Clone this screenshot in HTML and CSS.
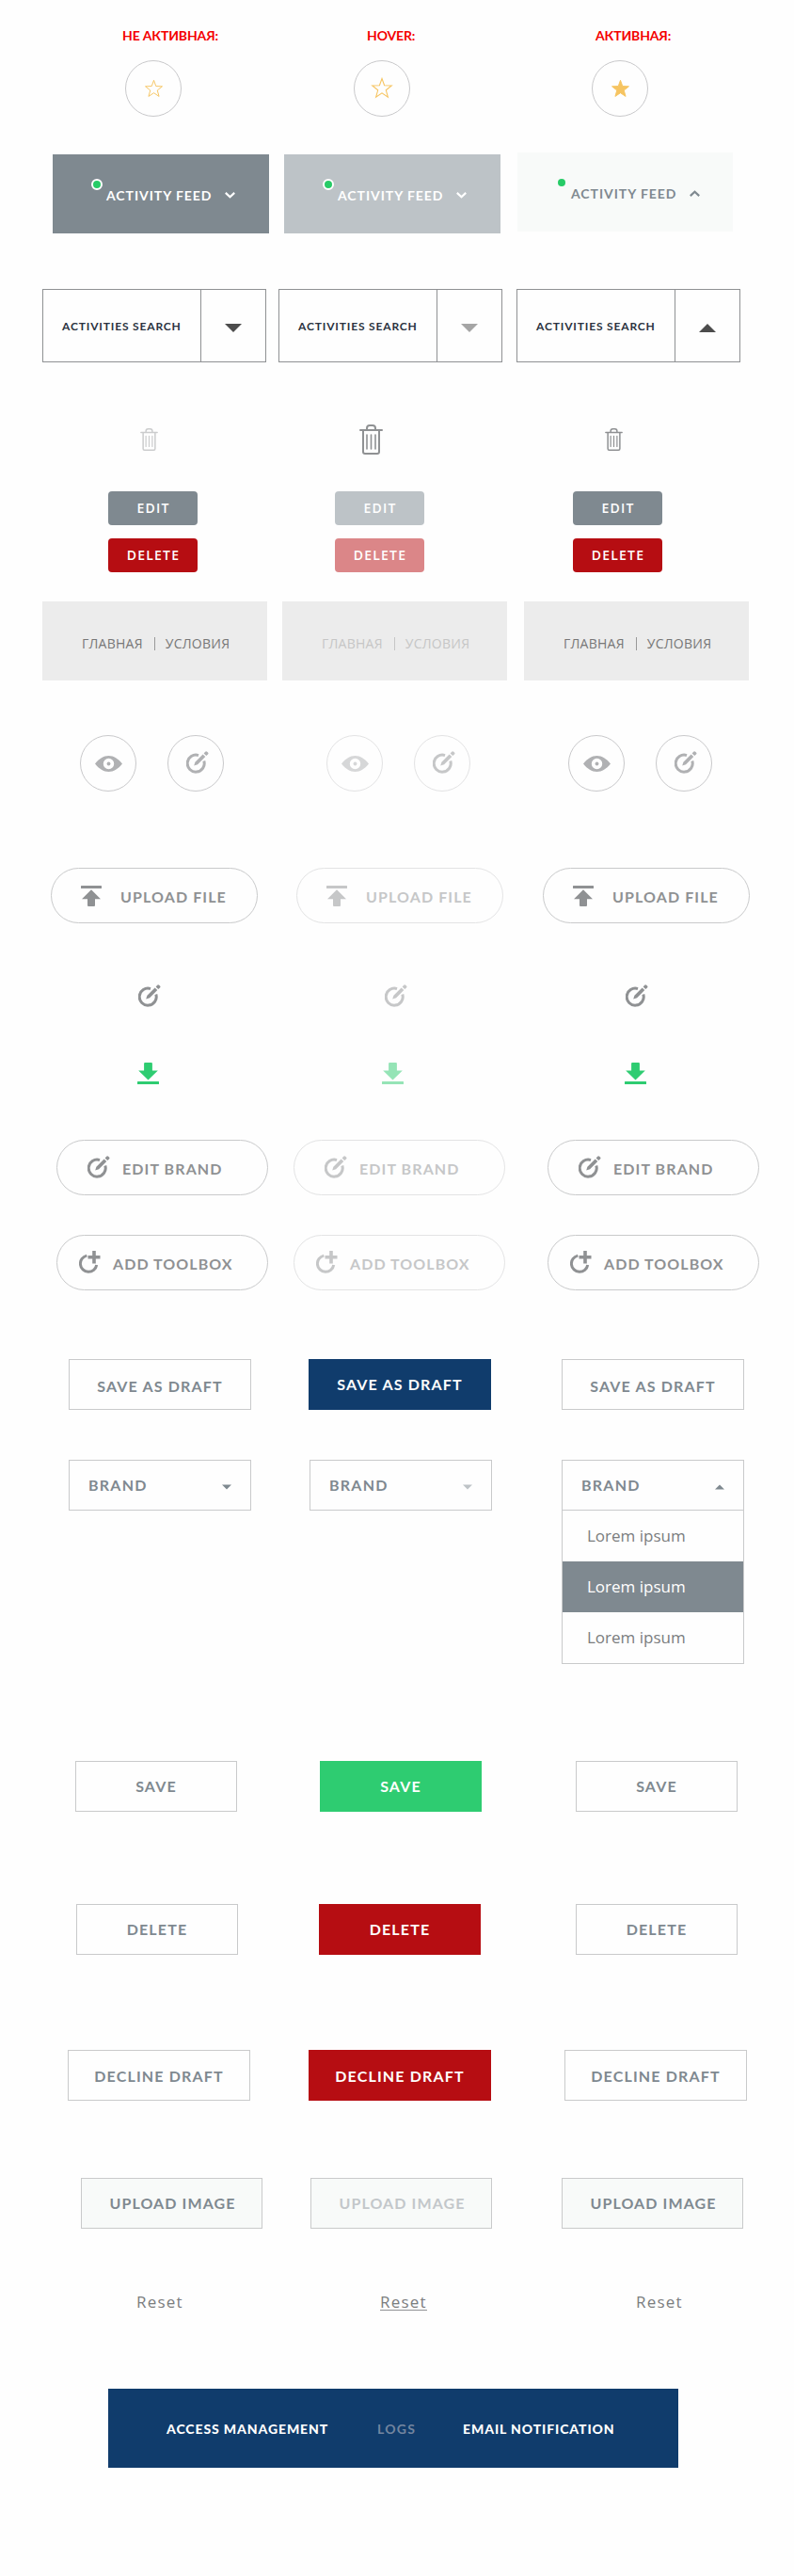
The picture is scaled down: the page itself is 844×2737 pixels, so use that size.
FILE: index.html
```
<!DOCTYPE html>
<html lang="ru">
<head>
<meta charset="utf-8">
<title>UI states</title>
<link rel="stylesheet" href="styles.css">
</head>
<body>
<svg class="sprite" aria-hidden="true">
  <symbol id="star" viewBox="0 0 24 23"><path d="M12 1.500l2.600 7.200 7.700.3-6 4.800 2.100 7.400-6.400-4.300-6.400 4.300 2.100-7.400-6-4.800 7.700-.3z"/></symbol>
  <symbol id="trash" viewBox="0 0 25 32"><g fill="none" stroke="currentColor" stroke-width="2" stroke-linecap="round"><path d="M1 6h23"/><path d="M8 5.500V4a3 3 0 0 1 3-3h3a3 3 0 0 1 3 3v1.500"/><path d="M4 6.500V29a2 2 0 0 0 2 2h13a2 2 0 0 0 2-2V6.500"/><path stroke-width="1.600" d="M8 11v15M12.500 11v15M17 11v15"/></g></symbol>
  <symbol id="eye" viewBox="0 0 29 17"><path fill="currentColor" fill-rule="evenodd" d="M0 8.500C4.500 3 9 0 14.500 0S24.500 3 29 8.500C24.500 14 20 17 14.500 17S4.500 14 0 8.500zM14.500 2.800a5.700 5.700 0 1 0 0 11.400 5.700 5.700 0 0 0 0-11.400z"/><circle cx="14.500" cy="8.500" r="1.900" fill="currentColor"/></symbol>
  <symbol id="edit" viewBox="0 0 24 24"><path fill="none" stroke="currentColor" stroke-width="3" d="M13 4.600A9 9 0 1 0 18.800 10.500"/><path fill="currentColor" d="M8.200 15.600l1.200-3.900L17.600 3.400 20.300 6.100 12.100 14.300zM18.600 2.400l1.600-1.700a1.400 1.400 0 0 1 2 0l.8.8a1.400 1.400 0 0 1 0 2l-1.700 1.600z"/></symbol>
  <symbol id="add" viewBox="0 0 24 24"><path fill="none" stroke="currentColor" stroke-width="3" d="M8.300 5.100A8.700 8.700 0 1 0 18.700 15"/><path fill="currentColor" d="M14.200 0h3.600v5h4.700v3.500h-4.700v5h-3.600v-5H9.500V5h4.700z"/></symbol>
  <symbol id="upload" viewBox="0 0 22 22"><path fill="currentColor" d="M.5 0h21a.5.500 0 0 1 .5.500v2a.5.500 0 0 1-.5.500H.5A.5.500 0 0 1 0 2.500v-2A.5.500 0 0 1 .5 0zM11 4.300l10 9.900h-6v6.800a1 1 0 0 1-1 1H8a1 1 0 0 1-1-1v-6.800H1z"/></symbol>
  <symbol id="download" viewBox="0 0 23 23"><path fill="currentColor" d="M.5 20h22a.5.500 0 0 1 .5.500v2a.5.500 0 0 1-.5.500H.5a.5.500 0 0 1-.5-.5v-2a.5.500 0 0 1 .5-.5zM11.500 18.600L1.200 8.500h5.900V1a1 1 0 0 1 1-1h6.800a1 1 0 0 1 1 1v7.500h5.900z"/></symbol>
  <symbol id="chevron" viewBox="0 0 11 7"><path fill="none" stroke="currentColor" stroke-width="2.200" d="M.8.900l4.700 4.300L10.200.900"/></symbol>
  <symbol id="caret" viewBox="0 0 18 9"><path fill="currentColor" d="M0 0h18L9 9z"/></symbol>
</svg>

<main class="sheet">
  <div class="row heads">
    <span>НЕ АКТИВНАЯ:</span><span>HOVER:</span><span>АКТИВНАЯ:</span>
  </div>

  <div class="row stars">
    <span class="circle"><svg class="star"><use href="#star"/></svg></span>
    <span class="circle"><svg class="star large"><use href="#star"/></svg></span>
    <span class="circle"><svg class="star full"><use href="#star"/></svg></span>
  </div>

  <div class="row feeds">
    <div class="feed"><i class="dot ring"></i><span>ACTIVITY FEED</span><svg class="chevron"><use href="#chevron"/></svg></div>
    <div class="feed hover"><i class="dot ring"></i><span>ACTIVITY FEED</span><svg class="chevron"><use href="#chevron"/></svg></div>
    <div class="feed active"><i class="dot"></i><span>ACTIVITY FEED</span><svg class="chevron up"><use href="#chevron"/></svg></div>
  </div>

  <div class="row searches">
    <div class="search"><span>ACTIVITIES SEARCH</span><b><svg class="caret"><use href="#caret"/></svg></b></div>
    <div class="search hover"><span>ACTIVITIES SEARCH</span><b><svg class="caret"><use href="#caret"/></svg></b></div>
    <div class="search"><span>ACTIVITIES SEARCH</span><b><svg class="caret up"><use href="#caret"/></svg></b></div>
  </div>

  <div class="row bins">
    <svg class="bin faded"><use href="#trash"/></svg><svg class="bin large"><use href="#trash"/></svg><svg class="bin"><use href="#trash"/></svg>
  </div>

  <div class="row smalls">
    <span class="small">EDIT</span><span class="small hover">EDIT</span><span class="small">EDIT</span>
    <span class="small red">DELETE</span><span class="small red hover">DELETE</span><span class="small red">DELETE</span>
  </div>

  <div class="row crumbs">
    <div class="crumb"><span>ГЛАВНАЯ</span><i></i><span>УСЛОВИЯ</span></div>
    <div class="crumb hover"><span>ГЛАВНАЯ</span><i></i><span>УСЛОВИЯ</span></div>
    <div class="crumb"><span>ГЛАВНАЯ</span><i></i><span>УСЛОВИЯ</span></div>
  </div>

  <div class="row rounds">
    <div class="pair"><span class="circle"><svg class="eye"><use href="#eye"/></svg></span><span class="circle"><svg class="edit"><use href="#edit"/></svg></span></div>
    <div class="pair hover"><span class="circle"><svg class="eye"><use href="#eye"/></svg></span><span class="circle"><svg class="edit"><use href="#edit"/></svg></span></div>
    <div class="pair"><span class="circle"><svg class="eye"><use href="#eye"/></svg></span><span class="circle"><svg class="edit"><use href="#edit"/></svg></span></div>
  </div>

  <div class="row uploads">
    <div class="pill upload"><svg class="up-icon"><use href="#upload"/></svg><span>UPLOAD FILE</span></div>
    <div class="pill upload hover"><svg class="up-icon"><use href="#upload"/></svg><span>UPLOAD FILE</span></div>
    <div class="pill upload"><svg class="up-icon"><use href="#upload"/></svg><span>UPLOAD FILE</span></div>
  </div>

  <div class="row edits">
    <svg class="edit"><use href="#edit"/></svg><svg class="edit half"><use href="#edit"/></svg><svg class="edit"><use href="#edit"/></svg>
  </div>

  <div class="row downloads">
    <svg class="down-icon"><use href="#download"/></svg><svg class="down-icon half"><use href="#download"/></svg><svg class="down-icon"><use href="#download"/></svg>
  </div>

  <div class="row pills">
    <div class="pill brand"><svg class="edit"><use href="#edit"/></svg><span>EDIT BRAND</span></div>
    <div class="pill brand hover"><svg class="edit"><use href="#edit"/></svg><span>EDIT BRAND</span></div>
    <div class="pill brand"><svg class="edit"><use href="#edit"/></svg><span>EDIT BRAND</span></div>
    <div class="pill toolbox"><svg class="edit"><use href="#add"/></svg><span>ADD TOOLBOX</span></div>
    <div class="pill toolbox hover"><svg class="edit"><use href="#add"/></svg><span>ADD TOOLBOX</span></div>
    <div class="pill toolbox"><svg class="edit"><use href="#add"/></svg><span>ADD TOOLBOX</span></div>
  </div>

  <div class="row drafts">
    <div class="btn wide">SAVE AS DRAFT</div><div class="btn wide navy">SAVE AS DRAFT</div><div class="btn wide">SAVE AS DRAFT</div>
  </div>

  <div class="row selects">
    <div class="btn select"><span>BRAND</span><svg class="arrow"><use href="#caret"/></svg></div>
    <div class="btn select hover"><span>BRAND</span><svg class="arrow"><use href="#caret"/></svg></div>
    <div class="open">
      <div class="btn select"><span>BRAND</span><svg class="arrow up"><use href="#caret"/></svg></div>
      <ul class="options"><li>Lorem ipsum</li><li class="selected">Lorem ipsum</li><li>Lorem ipsum</li></ul>
    </div>
  </div>

  <div class="row saves">
    <div class="btn">SAVE</div><div class="btn green">SAVE</div><div class="btn">SAVE</div>
  </div>

  <div class="row deletes">
    <div class="btn">DELETE</div><div class="btn red">DELETE</div><div class="btn">DELETE</div>
  </div>

  <div class="row declines">
    <div class="btn wide">DECLINE DRAFT</div><div class="btn wide red">DECLINE DRAFT</div><div class="btn wide">DECLINE DRAFT</div>
  </div>

  <div class="row images">
    <div class="btn wide tint">UPLOAD IMAGE</div><div class="btn wide tint hover">UPLOAD IMAGE</div><div class="btn wide tint">UPLOAD IMAGE</div>
  </div>

  <div class="row resets">
    <span>Reset</span><span class="underlined">Reset</span><span>Reset</span>
  </div>

  <nav class="nav"><span class="n1">ACCESS MANAGEMENT</span><span class="n2">LOGS</span><span>EMAIL NOTIFICATION</span></nav>
</main>
</body>
</html>
```
FILE: styles.css
```
* { box-sizing: border-box; }
body {
  margin: 0;
  background: #fefefe;
  font-family: Lato, "Open Sans", sans-serif;
  font-weight: 700;
  color: #7f8990;
  white-space: nowrap;
}
.sprite { display: block; width: 0; height: 0; }
svg { display: block; flex: none; }
.sheet { height: 2737px; padding-top: 28px; }
.row { display: grid; justify-items: start; }
.up { transform: scaleY(-1); }

/* column headings */
.heads {
  grid-template-columns: 260px 243px auto;
  padding-left: 130px;
  height: 20px;
  font-size: 14px;
  line-height: 20px;
  letter-spacing: -.14px;
  color: #f40000;
}

/* favourite buttons */
.stars { grid-template-columns: 243px 253px auto; padding-left: 133px; margin-top: 16px; }
.circle {
  display: flex;
  align-items: center;
  justify-content: center;
  width: 60px;
  height: 60px;
  border: 1px solid #c9c9cb;
  border-radius: 50%;
}
.star { width: 21px; height: 20px; fill: none; stroke: #f6c461; stroke-width: 1.100; }
.star.large { width: 24px; height: 23px; margin-bottom: 2px; }
.star.full { fill: #f6c461; }

/* activity feed */
.feeds { grid-template-columns: 246px 248px auto; align-items: start; padding-left: 56px; margin-top: 38px; height: 86px; }
.feed {
  position: relative;
  display: flex;
  align-items: center;
  width: 230px;
  height: 84px;
  margin-top: 2px;
  padding: 2px 0 0 57px;
  background: #7f8990;
  color: #fff;
  font-size: 14px;
  letter-spacing: .95px;
}
.feed.hover { background: #bdc3c7; }
.feed.active { width: 229px; margin-top: 0; background: #f8faf9; color: #7f8990; }
.feed .chevron { width: 11px; height: 7px; margin-left: 14px; }
.dot { position: absolute; left: 43px; top: 28px; width: 8px; height: 8px; border-radius: 50%; background: #27cb67; }
.dot.ring { left: 41px; top: 26px; width: 12px; height: 12px; border: 2px solid #fff; }

/* activity search */
.searches { grid-template-columns: 251px 253px auto; padding-left: 45px; margin-top: 59px; }
.search {
  display: flex;
  align-items: stretch;
  width: 238px;
  height: 78px;
  border: 1px solid #8f9193;
  color: #2b3341;
  font-size: 12px;
  line-height: 78px;
  letter-spacing: .84px;
}
.search span { width: 167px; padding-left: 20px; }
.search b { display: flex; flex: 1; align-items: center; justify-content: center; border-left: 1px solid #8f9193; color: #4c4c4c; }
.search.hover b { color: #a5a5a5; }
.caret { width: 18px; height: 9px; margin-top: 4px; }

/* trash icons */
.bins { grid-template-columns: 233px 261px auto; align-items: center; padding-left: 149px; margin-top: 66px; height: 32px; color: #8f9193; }
.bin { width: 19px; height: 24px; }
.bin.large { width: 25px; height: 32px; }
.faded { opacity: .45; }

/* small filled buttons */
.smalls { grid-template-columns: 241px 253px auto; row-gap: 14px; padding-left: 115px; margin-top: 39px; }
.small {
  width: 95px;
  height: 36px;
  padding-left: 1px;
  border-radius: 4px;
  background: #7f8990;
  color: #fff;
  font: 600 14px/36px "Open Sans", sans-serif;
  letter-spacing: 1.200px;
  text-align: center;
}
.small.red { background: #b60d12; }
.small.hover { background: #bdc3c7; }
.small.red.hover { background: #db8688; }

/* breadcrumbs */
.crumbs { grid-template-columns: 255px 257px auto; padding-left: 45px; margin-top: 31px; }
.crumb {
  display: flex;
  align-items: center;
  width: 239px;
  height: 84px;
  padding: 6px 0 0 42px;
  background: #ececec;
  color: #777;
  font: 400 14px/20px "Open Sans", sans-serif;
  letter-spacing: .25px;
}
.crumb i { width: 1px; height: 14px; margin: 0 11px 0 12px; background: #999; }
.crumb.hover { color: #c6c6c6; }
.crumb.hover i { background: #c6c6c6; }

/* round icon buttons */
.rounds { grid-template-columns: 262px 257px auto; padding-left: 85px; margin-top: 58px; color: #b0b1b3; }
.pair { display: flex; gap: 33px; }
.pair.hover { opacity: .5; }
.pair.hover .edit { color: #8f9193; }
.eye { width: 29px; height: 17px; }
.edit { width: 24px; height: 24px; }
.circle .edit { margin: 0 0 2px 3px; }

/* pill buttons */
.uploads { grid-template-columns: 261px 262px auto; padding-left: 54px; margin-top: 81px; }
.pill {
  display: flex;
  align-items: center;
  width: 225px;
  height: 59px;
  border: 1px solid #c9cacb;
  border-radius: 30px;
  color: #8f9193;
  font-size: 16px;
  letter-spacing: 1.100px;
}
.pill.hover { opacity: .5; }
.pill span { padding-top: 1px; }
.upload { width: 220px; padding-left: 31px; gap: 20px; }
.up-icon { width: 22px; height: 22px; }

.edits { grid-template-columns: 262px 256px auto; padding-left: 147px; margin-top: 65px; color: #8f9193; }
.downloads { grid-template-columns: 260px 258px auto; padding-left: 146px; margin-top: 59px; color: #2ecc71; }
.down-icon { width: 23px; height: 23px; }
.half { opacity: .5; }

.pills { grid-template-columns: 252px 270px auto; row-gap: 42px; padding-left: 60px; margin-top: 59px; }
.pill .edit { margin-top: -1px; }
.brand { padding-left: 32px; gap: 13px; }
.toolbox { padding-left: 23px; gap: 12px; letter-spacing: 1.050px; }
.toolbox .edit { margin-bottom: 1px; }

/* rectangular buttons */
.btn {
  width: 172px;
  height: 54px;
  border: 1px solid #c9cacb;
  font-size: 16px;
  line-height: 52px;
  letter-spacing: 1.170px;
  text-align: center;
}
.wide { width: 194px; }
.navy, .green, .btn.red { border: 0; color: #fff; line-height: 54px; }
.navy { background: #103c6c; }
.green { background: #2ecc71; }
.btn.red { background: #b60d12; }
.declines .btn { line-height: 54px; }
.declines .btn.red { line-height: 56px; }
.tint { width: 193px; background: #f8faf9; padding-left: 2px; letter-spacing: 1.100px; }
.tint.hover { color: #c3c7ca; }
.drafts { grid-template-columns: 255px 269px auto; padding-left: 73px; margin-top: 73px; }
.drafts .btn:not(.navy) { line-height: 55px; }

/* selects */
.selects { grid-template-columns: 256px 268px auto; align-items: start; padding-left: 73px; margin-top: 53px; }
.select { display: flex; align-items: center; justify-content: space-between; width: 194px; padding: 0 20px; line-height: 54px; letter-spacing: 1.270px; }
.arrow { width: 10px; height: 6px; margin-top: 4px; }
.select.hover .arrow { opacity: .5; }
.options {
  width: 194px;
  height: 164px;
  margin: -1px 0 0;
  padding: 0;
  border: 1px solid #c9cacb;
  list-style: none;
  color: #7b7d7e;
  font: 400 17px/54px "Open Sans", sans-serif;
}
.options li { height: 54px; padding-left: 26px; line-height: 53px; }
.options .selected { background: #7f8990; color: #fff; }

.saves { grid-template-columns: 260px 272px auto; padding-left: 80px; margin-top: 103px; }
.deletes { grid-template-columns: 258px 273px auto; padding-left: 81px; margin-top: 98px; }
.declines { grid-template-columns: 256px 272px auto; padding-left: 72px; margin-top: 101px; }
.images { grid-template-columns: 244px 267px auto; padding-left: 86px; margin-top: 82px; }

/* reset links */
.resets {
  grid-template-columns: 259px 272px auto;
  padding-left: 145px;
  margin-top: 66px;
  height: 24px;
  color: #7b7d7e;
  font: 400 17px/24px "Open Sans", sans-serif;
  letter-spacing: 1.200px;
}
.underlined { height: 21px; border-bottom: 1px solid #8f9193; }

/* navigation bar */
.nav {
  display: flex;
  align-items: center;
  width: 606px;
  height: 84px;
  margin: 80px 0 0 115px;
  padding: 1px 0 0 62px;
  background: #103c6c;
  color: #fff;
  font-size: 14px;
  font-weight: 900;
  letter-spacing: .9px;
}
.n1 { width: 224px; }
.n2 { width: 91px; font-weight: 700; letter-spacing: 1.300px; color: #72859f; }
```
